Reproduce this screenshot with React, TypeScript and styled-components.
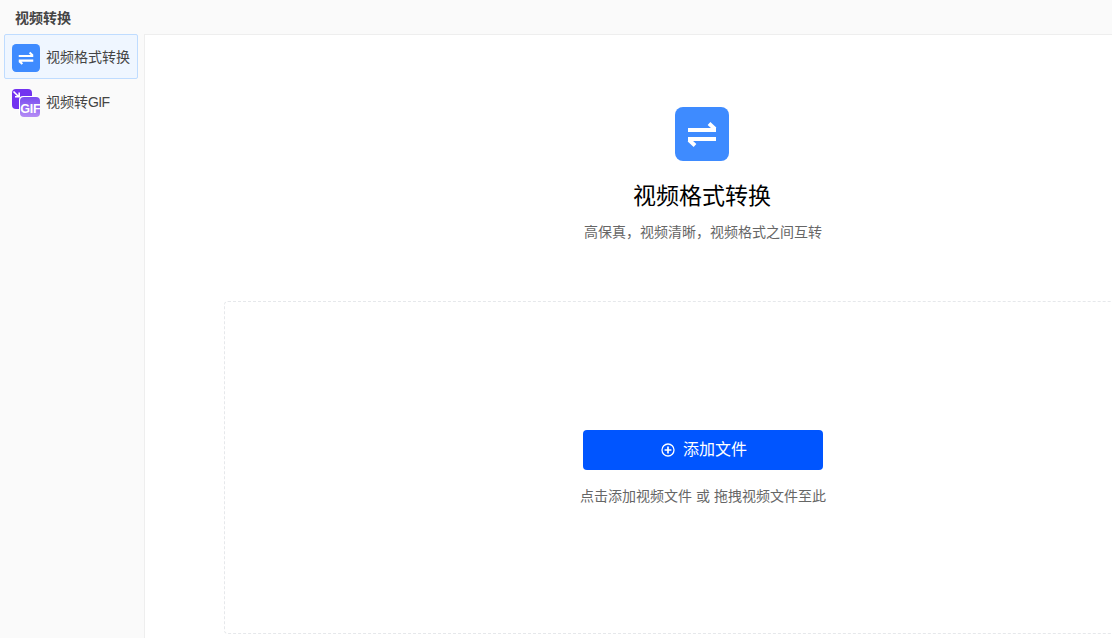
import * as React from "react";
import styled, { createGlobalStyle } from "styled-components";

const GlobalStyle = createGlobalStyle`
  html, body {
    margin: 0;
    padding: 0;
    height: 100%;
    overflow: hidden;
    background: #fafafa;
    font-family: "Liberation Sans", "Noto Sans CJK SC", sans-serif;
  }
`;

const Page = styled.div`
  width: 1112px;
  height: 638px;
  display: flex;
  flex-direction: column;
  overflow: hidden;
`;

const TitleBar = styled.div`
  height: 34px;
  flex-shrink: 0;
  display: flex;
  align-items: center;
  padding: 0 0 1px 15px;
  box-sizing: border-box;
  font-size: 14px;
  font-weight: 700;
  color: #444;
`;

const Body = styled.div`
  flex: 1;
  display: flex;
  min-height: 0;
`;

const Sidebar = styled.nav`
  width: 144px;
  flex-shrink: 0;
  padding: 0 6px 0 4px;
  box-sizing: border-box;
  display: flex;
  flex-direction: column;
`;

const NavItem = styled.div<{ $active?: boolean }>`
  height: 45px;
  box-sizing: border-box;
  display: flex;
  align-items: center;
  gap: 6px;
  padding: 0 0 2px 7px;
  border-radius: 2px;
  border: 1px solid ${p => (p.$active ? "#bfdcff" : "transparent")};
  background: ${p => (p.$active ? "#eff6ff" : "transparent")};
  font-size: 14px;
  color: #444;
  white-space: nowrap;
`;

const NavIcon = styled.span`
  display: flex;
  flex-shrink: 0;
  margin-top: 4px;
`;

const Latin = styled.span`
  letter-spacing: -0.7px;
`;

const Main = styled.main`
  flex: 1;
  background: #fff;
  border-top: 1px solid #eeeeee;
  border-left: 1px solid #eeeeee;
  display: flex;
  flex-direction: column;
  padding-top: 72px;
  min-width: 0;
`;

const Hero = styled.div`
  width: 1114px;
  flex-shrink: 0;
  display: flex;
  flex-direction: column;
  align-items: center;
`;

const HeroTitle = styled.h1`
  margin: 19px 0 0;
  font-size: 23px;
  line-height: 32px;
  font-weight: 400;
  color: #000;
`;

const HeroText = styled.p`
  margin: 10px 0 0 2px;
  font-size: 14px;
  line-height: 20px;
  color: #666;
`;

const DropZone = styled.section`
  margin: 59px 0 4px 79px;
  flex: 1;
  width: 958px;
  flex-shrink: 0;
  box-sizing: border-box;
  border: 1px dashed #e6e8eb;
  border-radius: 4px;
  display: flex;
  flex-direction: column;
  align-items: center;
  padding-top: 128px;
`;

const AddButton = styled.button`
  width: 240px;
  height: 40px;
  border: 0;
  border-radius: 4px;
  background: #0055ff;
  color: #fff;
  font-family: inherit;
  font-size: 16px;
  padding: 0 0 4px 2px;
  display: flex;
  align-items: center;
  justify-content: center;
  gap: 8px;
`;

const Hint = styled.p`
  margin: 16px 0 0;
  font-size: 14px;
  line-height: 20px;
  color: #666;
  white-space: nowrap;
`;

const SwapIcon = ({ size }: { size: number }) => (
  <svg width={size} height={size} viewBox="0 0 54 54" style={{ flexShrink: 0 }}>
    <rect width="54" height="54" rx="8" fill="#3e8bff" />
    <path
      d="M13 23H41M34 16.5L40 22M41 32H13M20 38.5L14 33"
      fill="none"
      stroke="#fff"
      strokeWidth="4"
    />
  </svg>
);

const GifIcon = () => (
  <svg width="28" height="28" viewBox="0 0 28 28" style={{ flexShrink: 0 }}>
    <defs>
      <linearGradient id="gif-front" x1="0" y1="0" x2="0" y2="1">
        <stop offset="0" stopColor="#7a4cf0" />
        <stop offset="1" stopColor="#b48cf5" />
      </linearGradient>
    </defs>
    <rect x="0" y="0" width="20" height="20" rx="4" fill="#7232f0" />
    <path d="M1.5 2.5L7 8M7.2 3.5V7.8H3" fill="none" stroke="#fff" strokeWidth="1.6" />
    <rect x="7" y="7" width="21" height="21" rx="4" fill="#fff" />
    <rect x="8" y="8" width="20" height="20" rx="4" fill="url(#gif-front)" />
    <text
      x="18.3"
      y="23.5"
      textAnchor="middle"
      fontSize="12.5"
      fontWeight="700"
      letterSpacing="-0.3"
      fill="#fff"
      fontFamily="Liberation Sans, sans-serif"
    >
      GIF
    </text>
  </svg>
);

const PlusIcon = () => (
  <svg width="14" height="14" viewBox="0 0 14 14" style={{ marginTop: 3 }}>
    <circle cx="7" cy="7" r="6" fill="none" stroke="#fff" strokeWidth="1.3" />
    <path d="M3.6 7H10.4M7 3.6V10.4" stroke="#fff" strokeWidth="1.7" />
  </svg>
);

export default function App() {
  return (
    <Page>
      <GlobalStyle />
      <TitleBar>视频转换</TitleBar>
      <Body>
        <Sidebar>
          <NavItem $active>
            <NavIcon>
              <SwapIcon size={28} />
            </NavIcon>
            视频格式转换
          </NavItem>
          <NavItem>
            <NavIcon>
              <GifIcon />
            </NavIcon>
            <span>
              视频转<Latin>GIF</Latin>
            </span>
          </NavItem>
        </Sidebar>
        <Main>
          <Hero>
            <SwapIcon size={54} />
            <HeroTitle>视频格式转换</HeroTitle>
            <HeroText>高保真，视频清晰，视频格式之间互转</HeroText>
          </Hero>
          <DropZone>
            <AddButton>
              <PlusIcon />
              添加文件
            </AddButton>
            <Hint>点击添加视频文件 或 拖拽视频文件至此</Hint>
          </DropZone>
        </Main>
      </Body>
    </Page>
  );
}
